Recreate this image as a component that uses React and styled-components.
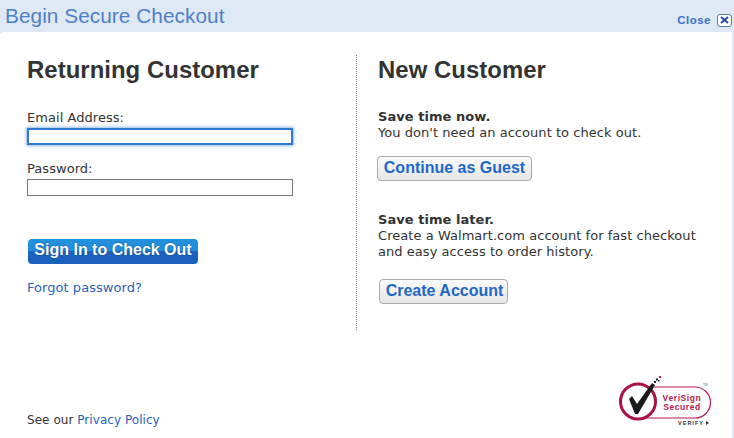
import React from "react";
import styled, { createGlobalStyle } from "styled-components";

const GlobalStyle = createGlobalStyle`
  html, body {
    margin: 0;
    padding: 0;
    background: #dfe8f5;
  }
  * { box-sizing: border-box; }
`;

const Page = styled.div`
  width: 734px;
  height: 438px;
  overflow: hidden;
  display: flex;
  flex-direction: column;
  background: #dfe8f5;
  font-family: "DejaVu Sans", Verdana, sans-serif;
  font-size: 13px;
  letter-spacing: 0.05px;
  color: #333;
`;

const TitleBar = styled.div`
  height: 32px;
  flex: none;
  display: flex;
  justify-content: space-between;
  padding: 5px 2px 0 5px;
`;

const Title = styled.div`
  font-family: "Liberation Sans", Arial, sans-serif;
  font-size: 20.800px;
  line-height: 22px;
  color: #4f7fc9;
`;

const CloseLink = styled.a`
  display: flex;
  align-items: center;
  gap: 6px;
  height: 14px;
  margin-top: 8px;
  font-family: "Liberation Sans", Arial, sans-serif;
  font-weight: bold;
  font-size: 11.5px;
  letter-spacing: 0.5px;
  color: #3a72cc;
`;

const CloseBox = styled.span`
  width: 15px;
  height: 13px;
  border: 1px solid #5a7db5;
  border-radius: 3px;
  background: #fff;
  display: flex;
  align-items: center;
  justify-content: center;
`;

const Panel = styled.div`
  flex: 1;
  margin-right: 2px;
  background: #fff;
  border-radius: 4px 0 0 0;
  display: flex;
  flex-direction: column;
`;

const Columns = styled.div`
  display: flex;
  padding-top: 23px;
`;

const LeftColumn = styled.div`
  width: 357px;
  height: 275px;
  flex: none;
  padding: 1px 0 0 27px;
  border-right: 1px dotted #888;
`;

const RightColumn = styled.div`
  flex: 1;
  padding: 1px 0 0 21px;
`;

const Heading = styled.h2`
  margin: 0;
  font-family: "Liberation Sans", Arial, sans-serif;
  font-size: 23.900px;
  line-height: 28px;
  font-weight: bold;
  color: #333;
`;

const Label = styled.label`
  display: block;
  line-height: 16px;
  margin-top: ${props => props.$top}px;
  color: #333;
`;

const Field = styled.div`
  width: 266px;
  height: 17px;
  margin-top: 2px;
  background: #fff;
  border: ${props => (props.$focused ? "2px solid #2f7ad0" : "1px solid #777")};
  box-shadow: ${props => (props.$focused ? "0 0 3px 1px #8fbcec" : "none")};
`;

const SignInButton = styled.button`
  display: block;
  width: 170px;
  height: 25px;
  margin: 43px 0 0 1px;
  padding: 0 0 4px;
  border: none;
  border-radius: 4px;
  background: linear-gradient(#2490dc 0, #2490dc 50%, #1a62bd 50%, #1a62bd 100%);
  color: #fff;
  font-family: "Liberation Sans", Arial, sans-serif;
  font-size: 16px;
  font-weight: bold;
  text-shadow: 0 0 2px #0d4a96;
`;

const BlueLink = styled.a`
  color: #2a62b8;
`;

const ForgotRow = styled.div`
  margin-top: 16px;
  line-height: 16px;
`;

const SaveBlock = styled.div`
  margin-top: ${props => props.$top}px;
  line-height: 16px;
  color: #333;
`;

const SaveTitle = styled.div`
  font-weight: bold;
  line-height: 17px;
`;

const GreyButton = styled.button`
  display: block;
  height: 25px;
  width: ${props => props.$width}px;
  margin: ${props => props.$top}px 0 0 ${props => props.$left}px;
  padding: 0 0 2px ${props => props.$shift}px;
  border: 1px solid #aaa;
  border-radius: 4px;
  background: linear-gradient(#fafafa, #e6e6e6);
  color: #1f68c8;
  font-family: "Liberation Sans", Arial, sans-serif;
  font-size: 16px;
  font-weight: bold;
`;

const Footer = styled.div`
  flex: 1;
  display: flex;
  justify-content: space-between;
  align-items: flex-end;
  padding: 0 20px 10px 27px;
`;

const PrivacyNote = styled.div`
  font-size: 12px;
  line-height: 16px;
  color: #333;
`;

const BadgeSvg = styled.svg`
  display: block;
  margin-bottom: -3px;
`;

function CloseIcon() {
  return (
    <svg width="9" height="8" viewBox="0 0 9 8">
      <path d="M1 1 L8 7 M8 1 L1 7" stroke="#1f4ea3" strokeWidth="2" fill="none" />
    </svg>
  );
}

function VeriSignBadge() {
  return (
    <BadgeSvg width="96" height="56" viewBox="0 0 96 56">
      <path d="M24 12 H79 A15.500 15.500 0 0 1 79 43 H24" fill="#fff" stroke="#b5184f" strokeWidth="1.200" />
      <circle cx="22" cy="26.500" r="17.500" fill="#fff" stroke="#a8144a" strokeWidth="3" />
      <path d="M13 24 L16 21 L21 29 L36 8 L39 10 L22 39 L19 39 Z" fill="#1a1a1a" />
      <g fill="#222">
        <rect x="38" y="6" width="2" height="2" />
        <rect x="40" y="3.500" width="2" height="2" />
        <rect x="42" y="5" width="1.500" height="1.500" />
      </g>
      <rect x="43" y="1" width="2" height="2" fill="#b5184f" />
      <text x="66" y="26" textAnchor="middle" fontFamily="Liberation Sans" fontWeight="bold" fontSize="8.500" letterSpacing="0.6" fill="#b5184f">VeriSign</text>
      <text x="66" y="35" textAnchor="middle" fontFamily="Liberation Sans" fontWeight="bold" fontSize="8.500" letterSpacing="0.6" fill="#b5184f">Secured</text>
      <text x="75" y="50" textAnchor="middle" fontFamily="Liberation Sans" fontWeight="bold" fontSize="5.500" letterSpacing="1" fill="#333">VERIFY</text>
      <path d="M90 46 L93 48 L90 50 Z" fill="#333" />
      <text x="87" y="11" fontFamily="Liberation Sans" fontSize="3" fill="#555">TM</text>
    </BadgeSvg>
  );
}

export default function App() {
  return (
    <React.Fragment>
      <GlobalStyle />
      <Page>
        <TitleBar>
          <Title>Begin Secure Checkout</Title>
          <CloseLink>
            Close
            <CloseBox><CloseIcon /></CloseBox>
          </CloseLink>
        </TitleBar>
        <Panel>
          <Columns>
            <LeftColumn>
              <Heading>Returning Customer</Heading>
              <Label $top={26}>Email Address:</Label>
              <Field $focused />
              <Label $top={16}>Password:</Label>
              <Field />
              <SignInButton>Sign In to Check Out</SignInButton>
              <ForgotRow><BlueLink>Forgot password?</BlueLink></ForgotRow>
            </LeftColumn>
            <RightColumn>
              <Heading>New Customer</Heading>
              <SaveBlock $top={24}>
                <SaveTitle>Save time now.</SaveTitle>
                You don't need an account to check out.
              </SaveBlock>
              <GreyButton $width={155} $left={-1} $top={15} $shift={0}>Continue as Guest</GreyButton>
              <SaveBlock $top={30}>
                <SaveTitle>Save time later.</SaveTitle>
                Create a Walmart.com account for fast checkout
                <br />
                and easy access to order history.
              </SaveBlock>
              <GreyButton $width={129} $left={1} $top={19} $shift={2}>Create Account</GreyButton>
            </RightColumn>
          </Columns>
          <Footer>
            <PrivacyNote>See our <BlueLink>Privacy Policy</BlueLink></PrivacyNote>
            <VeriSignBadge />
          </Footer>
        </Panel>
      </Page>
    </React.Fragment>
  );
}
